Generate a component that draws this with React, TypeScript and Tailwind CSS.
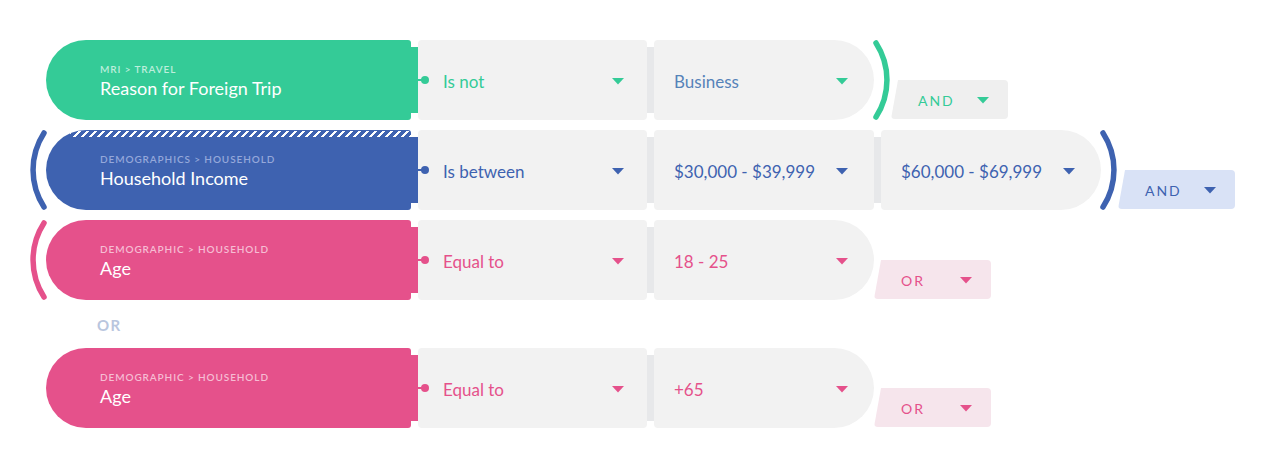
import React from "react";

type Tone = "green" | "blue" | "pink";

const tones = {
  green: {
    pill: "bg-[#34cb97]",
    text: "text-[#34cb97]",
    dot: "bg-[#34cb97]",
    label: "text-[#bdeedc]",
    stroke: "#34cb97",
    join: "bg-[#efefef] text-[#34cb97]",
  },
  blue: {
    pill: "bg-[#3e62b0]",
    text: "text-[#3e62b0]",
    dot: "bg-[#3e62b0]",
    label: "text-[#95a8da]",
    stroke: "#3e62b0",
    join: "bg-[#d9e2f6] text-[#3e62b0]",
  },
  pink: {
    pill: "bg-[#e5518b]",
    text: "text-[#e5518b]",
    dot: "bg-[#e5518b]",
    label: "text-[#f6bdd3]",
    stroke: "#e5518b",
    join: "bg-[#f6e5ec] text-[#e5518b]",
  },
};

type Field = { value: string; textClass?: string };

type RowProps = {
  tone: Tone;
  path: string;
  title: string;
  operator: string;
  values: Field[];
  join: string;
  openParen?: boolean;
  closeParen?: boolean;
  striped?: boolean;
};

function Caret({ color }: { color: string }) {
  return (
    <svg width="12" height="7" viewBox="0 0 12 7" className="shrink-0">
      <polygon points="0,0 12,0 6,6.5" fill={color} />
    </svg>
  );
}

function Paren({ side, color }: { side: "left" | "right"; color: string }) {
  const d = side === "left" ? "M14 3 A68 68 0 0 0 14 77" : "M4 3 A68 68 0 0 1 4 77";
  return (
    <svg width="18" height="80" viewBox="0 0 18 80" className="block">
      <path d={d} fill="none" stroke={color} strokeWidth="5.5" strokeLinecap="round" />
    </svg>
  );
}

function Strip() {
  return <div className="w-[7px] shrink-0 my-[7px] bg-[#e7e8ea]" />;
}

function Row({ tone, path, title, operator, values, join, openParen, closeParen, striped }: RowProps) {
  const t = tones[tone];
  return (
    <div className="flex h-20">
      <div className="w-4 shrink-0 relative">
        {openParen && (
          <div className="absolute left-0 top-0">
            <Paren side="left" color={t.stroke} />
          </div>
        )}
      </div>

      <div
        className={`relative w-[365px] shrink-0 overflow-hidden rounded-l-[40px] rounded-r-[3px] pl-[54px] flex flex-col justify-center ${t.pill}`}
      >
        {striped && (
          <div className="absolute left-[24px] right-0 top-[1px] h-[6px] bg-[repeating-linear-gradient(135deg,#ffffff_0px,#ffffff_2.2px,transparent_2.2px,transparent_5.66px)]" />
        )}
        <div className={`text-[10px] leading-[12px] font-semibold tracking-[0.09em] uppercase mt-[2px] ${t.label}`}>
          {path}
        </div>
        <div className="text-white text-[18px] leading-[24px] mt-[1px]">{title}</div>
      </div>
      <div className={`w-[7px] shrink-0 my-[7px] ${t.pill}`} />

      <div className="relative w-[229px] shrink-0 bg-[#f2f2f2] rounded-[4px] flex items-center justify-between pl-[25px] pr-[23px] pt-[3px]">
        <div className={`absolute left-0 top-1/2 -translate-y-1/2 w-[6px] h-[2px] ${t.dot}`} />
        <div className={`absolute left-[3px] top-1/2 -translate-y-1/2 w-2 h-2 rounded-full ${t.dot}`} />
        <span className={`text-[17px] ${t.text}`}>{operator}</span>
        <Caret color={t.stroke} />
      </div>

      {values.map((v, i) => (
        <React.Fragment key={i}>
          <Strip />
          <div
            className={`w-[220px] shrink-0 bg-[#f2f2f2] flex items-center justify-between pl-5 pr-[26px] pt-[3px] ${
              i === values.length - 1 ? "rounded-l-[4px] rounded-r-[40px]" : "rounded-[4px]"
            }`}
          >
            <span className={`text-[17px] ${v.textClass ?? t.text}`}>{v.value}</span>
            <Caret color={t.stroke} />
          </div>
        </React.Fragment>
      ))}

      {closeParen && (
        <div className="w-[17px] shrink-0 relative">
          <div className="absolute left-[-2px] top-0">
            <Paren side="right" color={t.stroke} />
          </div>
        </div>
      )}

      <div
        className={`self-end mb-[1px] w-[117px] h-[39px] shrink-0 rounded-[4px] flex items-center justify-between pl-[27px] pr-[19px] pt-[2px] [clip-path:polygon(7px_0,100%_0,100%_100%,0_100%)] ${t.join}`}
      >
        <span className="text-[14px] tracking-[0.14em]">{join}</span>
        <Caret color={t.stroke} />
      </div>
    </div>
  );
}

export default function App() {
  return (
    <div className="w-[1275px] h-[468px] bg-white pt-10 pl-[30px] font-['Lato','Open_Sans',sans-serif]">
      <Row
        tone="green"
        path="MRI > Travel"
        title="Reason for Foreign Trip"
        operator="Is not"
        values={[{ value: "Business", textClass: "text-[#5683b9]" }]}
        join="AND"
        closeParen
      />
      <div className="mt-[10px]">
        <Row
          tone="blue"
          path="Demographics > Household"
          title="Household Income"
          operator="Is between"
          values={[{ value: "$30,000 - $39,999" }, { value: "$60,000 - $69,999" }]}
          join="AND"
          openParen
          closeParen
          striped
        />
      </div>
      <div className="mt-[10px]">
        <Row
          tone="pink"
          path="Demographic > Household"
          title="Age"
          operator="Equal to"
          values={[{ value: "18 - 25" }]}
          join="OR"
          openParen
        />
      </div>
      <div className="h-12 flex items-center pl-[67px] pt-[3px]">
        <span className="text-[15px] font-bold tracking-[0.1em] text-[#b9c6de]">OR</span>
      </div>
      <Row
        tone="pink"
        path="Demographic > Household"
        title="Age"
        operator="Equal to"
        values={[{ value: "+65" }]}
        join="OR"
      />
    </div>
  );
}
